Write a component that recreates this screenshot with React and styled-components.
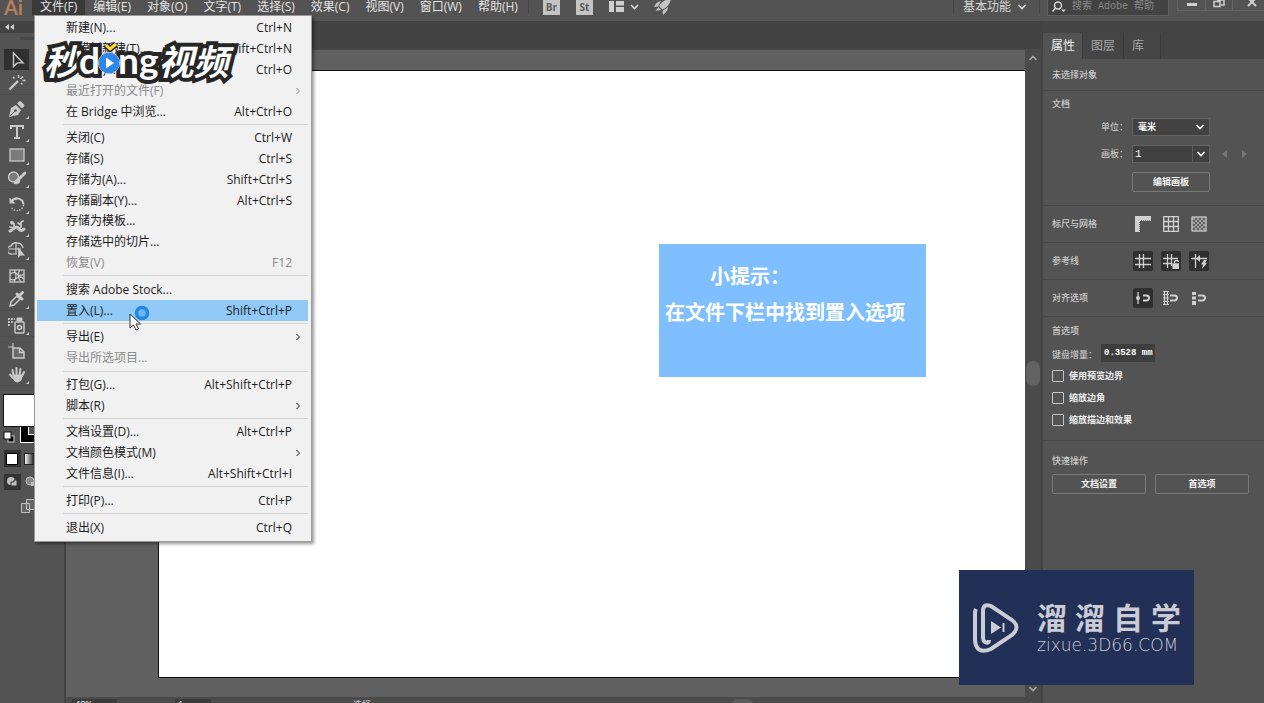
import React, { useState } from "react"
import styled, { createGlobalStyle } from "styled-components"

const GlobalStyle = createGlobalStyle`
  * {
    box-sizing: border-box;
  }
  body {
    margin: 0;
    background: #535353;
    color: #d8d8d8;
    font-family: "Open Sans", "Noto Sans CJK SC", sans-serif;
    font-size: 12px;
    line-height: 16px;
  }
  button,
  input,
  select {
    font: inherit;
    color: inherit;
    margin: 0;
    padding: 0;
    border: 0;
    background: none;
    border-radius: 0;
  }
  svg {
    display: block;
    flex: none;
  }
`

const Window = styled.div`
  position: relative;
  display: flex;
  flex-direction: column;
  height: 100vh;
  overflow: hidden;
`

const MenuBar = styled.header`
  display: flex;
  align-items: center;
  flex: none;
  height: 21px;
  padding-bottom: 7px;
  background: #535353;
`

const AppMark = styled.span`
  width: 32px;
  padding-left: 4px;
  color: #b57f5b;
  font-family: Lato, sans-serif;
  font-size: 20px;
  font-weight: bold;
`

const MenuTitle = styled.button`
  padding: 0 8px;
  color: #e4e4e4;
  white-space: nowrap;
  background: ${props => (props.$open ? "#3a3a3a" : "none")};
`

const BarRule = styled.span`
  width: 1px;
  height: 14px;
  margin: 0 ${props => props.$after || 0}px 0 ${props => props.$before || 0}px;
  background: #464646;
`

const AppBadge = styled.button`
  width: 17px;
  height: 16px;
  margin-right: 16px;
  background: #c4c4c4;
  color: #5a5a5a;
  font-size: 10px;
  font-weight: bold;
`

const IconButton = styled.button`
  display: flex;
  align-items: center;
  justify-content: center;
  margin-right: ${props => props.$gap || 0}px;
`

const Spacer = styled.div`
  flex: ${props => props.$grow || 1};
`

const Workspace = styled.button`
  display: flex;
  align-items: center;
  gap: 6px;
  padding: 0 12px 0 9px;
  white-space: nowrap;
`

const SearchBox = styled.label`
  display: flex;
  align-items: center;
  gap: 6px;
  width: 122px;
  height: 18px;
  padding-left: 4px;
  border: 1px solid #606060;
  background: #424242;
  input {
    width: 92px;
    font-family: "Liberation Mono", "Noto Sans CJK SC", monospace;
    font-size: 10px;
  }
  input::placeholder {
    color: #8a8a8a;
    opacity: 1;
  }
`

const WindowButtons = styled.div`
  display: flex;
  align-self: flex-start;
  margin-left: 8px;
  border: 1px solid #636363;
  border-width: 0 0 1px 1px;
  button {
    display: flex;
    justify-content: center;
    width: 27px;
    height: 10px;
  }
  button + button {
    border-left: 1px solid #636363;
  }
  button:last-child {
    width: 32px;
    padding-left: 6px;
  }
`

const Body = styled.div`
  display: flex;
  flex: 1;
  min-height: 0;
`

const ToolColumn = styled.aside`
  flex: none;
  width: 66px;
  border-right: 2px solid #434343;
  background: #535353;
`

const ToolHeader = styled.div`
  height: 12px;
  padding: 3px 5px;
  background: #434343;
`

const Grip = styled.div`
  height: 3px;
  margin: 4px 20px 8px;
  background: #474747;
`

const ToolGroup = styled.div`
  display: flex;
  flex-direction: column;
  padding-left: 3px;
  margin-bottom: 2px;
  border-bottom: 1px solid #4c4c4c;
`

const Tool = styled.button`
  position: relative;
  display: flex;
  align-items: center;
  justify-content: center;
  width: 27px;
  height: 23px;
  border: 1px solid #535353;
  background: ${props => (props.$active ? "#303030" : "none")};
  color: #c9c9c9;
  &::after {
    content: "";
    position: absolute;
    right: 0;
    bottom: 0;
    border-left: 3px solid transparent;
    border-bottom: 3px solid ${props => (props.$more ? "#c9c9c9" : "transparent")};
  }
`

const Swatches = styled.div`
  padding: 6px 0 0 3px;
`

const Document = styled.main`
  display: flex;
  flex-direction: column;
  flex: 1;
  min-width: 0;
`

const DocTabs = styled.div`
  flex: none;
  height: 28px;
  background: #424242;
`

const View = styled.div`
  display: flex;
  flex: 1;
  min-height: 0;
  background: #606060;
  border-top: 1px solid #4c4c4c;
`

const Pasteboard = styled.div`
  display: flex;
  flex: 1;
  padding: 20px 0 19px 92px;
`

const Artboard = styled.div`
  position: relative;
  flex: 1;
  border: 1px solid #101010;
  border-right: 0;
  background: #ffffff;
`

const Hint = styled.div`
  position: absolute;
  left: 500px;
  top: 173px;
  width: 267px;
  height: 133px;
  padding: 14px 6px;
  background: #7fbfff;
  color: #ffffff;
  font-family: "Noto Sans CJK SC", sans-serif;
  font-size: 20px;
  font-weight: bold;
  line-height: 36px;
  white-space: nowrap;
  p {
    margin: 0;
  }
  p:first-child {
    padding-left: 45px;
  }
`

const ScrollTrack = styled.div`
  display: flex;
  flex-direction: column;
  align-items: center;
  justify-content: space-between;
  width: 16px;
  padding: 5px 0;
  background: #4a4a4a;
  color: #a8a8a8;
`

const ScrollThumb = styled.div`
  width: 14px;
  height: 25px;
  border-radius: 7px;
  background: #626262;
`

const StatusBar = styled.footer`
  display: flex;
  align-items: flex-start;
  flex: none;
  height: 6px;
  overflow: hidden;
  padding: 2px 0 0 6px;
  background: #4b4b4b;
  font-size: 9px;
  line-height: 12px;
  input {
    flex: none;
    width: 45px;
    height: 12px;
    margin-right: 58px;
    padding-left: 3px;
    background: #3c3c3c;
    color: #ffffff;
  }
  input + input {
    width: 36px;
    margin-right: 142px;
  }
`

const BottomThumb = styled.div`
  width: 22px;
  height: 12px;
  border-radius: 6px;
  background: #5c5c5c;
`

const Panel = styled.aside`
  flex: none;
  width: 223px;
  border-left: 2px solid #434343;
  background: #535353;
  font-size: 9px;
`

const PanelTabs = styled.div`
  display: flex;
  height: 38px;
  padding-top: 12px;
  background: #444444;
`

const PanelTab = styled.button`
  padding: 0 8px;
  border-right: 1px solid #3a3a3a;
  background: ${props => (props.$active ? "#535353" : "#454545")};
  color: ${props => (props.$active ? "#f0f0f0" : "#a8a8a8")};
  font-size: 12px;
  &:first-child {
    padding-right: 7px;
  }
  &:last-child {
    padding-right: 16px;
  }
`

const Section = styled.section`
  padding: ${props => props.$pad || "8px"} 0;
  padding-left: 9px;
  border-bottom: 1px solid #474747;
  &:last-child {
    border-bottom: 0;
  }
`

const Heading = styled.h2`
  margin: 0;
  color: #cccccc;
  font-size: 9px;
  font-weight: 500;
  line-height: 16px;
`

const FieldRow = styled.div`
  display: flex;
  align-items: center;
  margin-top: ${props => props.$top || 9}px;
  label {
    width: 76px;
    margin-right: 4px;
    text-align: right;
  }
`

const SelectBox = styled.div`
  display: flex;
  align-items: center;
  width: 78px;
  height: 18px;
  border: 1px solid #636363;
  background: #424242;
  color: #ffffff;
  font-weight: bold;
  select {
    appearance: none;
    width: 100%;
    height: 16px;
    padding-left: 5px;
    line-height: 16px;
  }
  svg {
    margin-left: -14px;
    margin-right: 4px;
    pointer-events: none;
  }
`

const ComboBox = styled.div`
  display: flex;
  width: 78px;
  height: 18px;
  border: 1px solid #636363;
  background: #404040;
  color: #ffffff;
  input {
    flex: 1;
    min-width: 0;
    padding-left: 2px;
    font-family: "Liberation Mono", monospace;
    font-size: 11px;
  }
  button {
    display: flex;
    align-items: center;
    width: 17px;
    padding-left: 3px;
    border-left: 1px solid #5c5c5c;
  }
`

const Pager = styled.div`
  display: flex;
  gap: 13px;
  margin-left: 12px;
`

const BoardAction = styled.div`
  display: flex;
  margin-top: 9px;
  padding-left: 80px;
`

const OutlineButton = styled.button`
  width: ${props => props.$width}px;
  height: 20px;
  border: 1px solid #7a7a7a;
  border-radius: 2px;
  color: #f4f4f4;
  font-weight: bold;
`

const ToggleRow = styled.div`
  display: flex;
  align-items: center;
  gap: 8px;
  h2 {
    width: 73px;
  }
`

const Toggle = styled.button`
  display: flex;
  align-items: center;
  justify-content: center;
  width: 20px;
  height: 20px;
  border-radius: 2px;
  background: ${props => (props.$on ? "#2f2f2f" : "none")};
  color: #d0d0d0;
`

const Increment = styled.div`
  display: flex;
  align-items: flex-end;
  gap: 4px;
  margin-top: 5px;
  label {
    line-height: 14px;
  }
  input {
    width: 54px;
    height: 18px;
    padding-left: 3px;
    background: #3d3d3d;
    color: #ffffff;
    font-family: "Liberation Mono", monospace;
    font-size: 9px;
    font-weight: bold;
  }
`

const Check = styled.label`
  display: flex;
  align-items: center;
  gap: 5px;
  margin-top: 6px;
  color: #eeeeee;
  font-weight: bold;
  input {
    appearance: none;
    width: 12px;
    height: 12px;
    border: 1px solid #c4c4c4;
    border-radius: 1px;
  }
  input:checked {
    background: #c4c4c4;
  }
`

const ButtonPair = styled.div`
  display: flex;
  gap: 9px;
  margin-top: 5px;
`

const Dropdown = styled.ul`
  position: absolute;
  left: 34px;
  top: 15px;
  display: flex;
  flex-direction: column;
  width: 278px;
  min-height: 527px;
  margin: 0;
  padding: 2px 3px 3px 2px;
  border: 1px solid #9a9a9a;
  background: #f1f1f1;
  box-shadow: 2px 2px 3px rgba(0, 0, 0, 0.4);
  color: #1c1c1c;
  list-style: none;
`

const Item = styled.li`
  display: flex;
  flex: 1;
  background: ${props => (props.$active ? "#90c8f6" : "none")};
  button {
    display: flex;
    align-items: center;
    justify-content: space-between;
    width: 100%;
    padding: 0 16px 0 29px;
    line-height: 16px;
    white-space: nowrap;
  }
  button:disabled {
    color: #8a8a8a;
  }
  svg {
    margin-right: -9px;
  }
`

const Divider = styled.li`
  height: 6px;
  margin-left: 26px;
  border-bottom: 3px solid #f1f1f1;
  box-shadow: inset 0 -1px #d4d4d4;
`

const Cursor = styled.svg`
  position: absolute;
  left: 128px;
  top: 304px;
`

const VideoMark = styled.div`
  position: absolute;
  left: 44px;
  top: 39px;
  display: flex;
  align-items: center;
  color: #ffffff;
  font-family: Lato, sans-serif;
  font-size: 37px;
  font-weight: bold;
  line-height: 42px;
  -webkit-text-stroke: 8px #262626;
  stroke-linejoin: round;
  paint-order: stroke fill;
  em {
    font-family: "Noto Sans CJK SC", sans-serif;
    font-size: 35px;
    font-weight: bold;
  }
  svg {
    z-index: 1;
    margin: 0 -2px;
  }
`

const SiteMark = styled.div`
  position: absolute;
  right: 70px;
  bottom: 18px;
  display: flex;
  align-items: center;
  gap: 17px;
  width: 235px;
  height: 115px;
  padding-left: 13px;
  background: #222f56;
  color: #c9ccd4;
  strong {
    display: flex;
    gap: 8px;
    font-family: "Noto Sans CJK SC", sans-serif;
    font-size: 30px;
    font-weight: bold;
    line-height: 34px;
  }
  small {
    display: block;
    font-family: "DejaVu Sans", sans-serif;
    font-size: 17px;
    font-weight: 200;
    line-height: 24px;
  }
`

const menuTitles = [
  "文件(F)",
  "编辑(E)",
  "对象(O)",
  "文字(T)",
  "选择(S)",
  "效果(C)",
  "视图(V)",
  "窗口(W)",
  "帮助(H)",
]

const fileMenu = [
  { label: "新建(N)...", keys: "Ctrl+N" },
  { label: "从模板新建(T)...", keys: "Shift+Ctrl+N" },
  { label: "打开(O)...", keys: "Ctrl+O" },
  { label: "最近打开的文件(F)", sub: true, disabled: true },
  { label: "在 Bridge 中浏览...", keys: "Alt+Ctrl+O" },
  null,
  { label: "关闭(C)", keys: "Ctrl+W" },
  { label: "存储(S)", keys: "Ctrl+S" },
  { label: "存储为(A)...", keys: "Shift+Ctrl+S" },
  { label: "存储副本(Y)...", keys: "Alt+Ctrl+S" },
  { label: "存储为模板..." },
  { label: "存储选中的切片..." },
  { label: "恢复(V)", keys: "F12", disabled: true },
  null,
  { label: "搜索 Adobe Stock..." },
  { label: "置入(L)...", keys: "Shift+Ctrl+P", active: true },
  null,
  { label: "导出(E)", sub: true },
  { label: "导出所选项目...", disabled: true },
  null,
  { label: "打包(G)...", keys: "Alt+Shift+Ctrl+P" },
  { label: "脚本(R)", sub: true },
  null,
  { label: "文档设置(D)...", keys: "Alt+Ctrl+P" },
  { label: "文档颜色模式(M)", sub: true },
  { label: "文件信息(I)...", keys: "Alt+Shift+Ctrl+I" },
  null,
  { label: "打印(P)...", keys: "Ctrl+P" },
  null,
  { label: "退出(X)", keys: "Ctrl+Q" },
]

const toolGroups = [
  [
    {
      name: "选择工具",
      active: true,
      art: <path d="M5.500 2v13.500l3.800-3.600h5.700z" fill="none" stroke="currentColor" strokeWidth="1.400" />,
    },
    {
      name: "魔棒工具",
      art: (
        <g stroke="currentColor" fill="none">
          <path d="M1.500 15.500L10 7" strokeWidth="2.400" />
          <path d="M10.500 1v3M14.500 6.500h3M12.500 5l2.500-2.500M5 3l1.500 1.500M13 9l1.500 1.500" strokeWidth="1.600" />
        </g>
      ),
    },
  ],
  [
    {
      name: "钢笔工具",
      more: true,
      art: (
        <g>
          <path d="M1 17l2-9 5-3 5 5-3 5z" fill="currentColor" />
          <path d="M9 3.500l2-2q1-1 2 0l3 3q1 1 0 2l-2 2z" fill="currentColor" />
          <path d="M2 16l5-5" stroke="#535353" />
          <circle cx="7.500" cy="10.500" r="1.300" fill="#535353" />
        </g>
      ),
    },
    {
      name: "文字工具",
      more: true,
      art: (
        <path
          d="M3 6V3h12v3M9 3v12M6 15h6"
          fill="none"
          stroke="currentColor"
          strokeWidth="2"
        />
      ),
    },
    {
      name: "矩形工具",
      more: true,
      art: <rect x="2" y="3" width="14" height="12" fill="#7a7a7a" stroke="currentColor" strokeWidth="1.300" />,
    },
    {
      name: "斑点画笔工具",
      more: true,
      art: (
        <g stroke="currentColor">
          <circle cx="5.500" cy="8" r="5" fill="#7a7a7a" strokeWidth="1.400" />
          <path d="M17 4l-7 7" strokeWidth="3" strokeLinecap="round" />
          <path d="M10 10q-3 0-4 4.500 5 1 6-2.500z" fill="currentColor" />
        </g>
      ),
    },
  ],
  [
    {
      name: "旋转工具",
      more: true,
      art: (
        <g fill="none" stroke="currentColor">
          <path d="M3.500 6.500A6.500 6.500 0 0 1 15.500 9.500" strokeWidth="2" />
          <path d="M15.500 10A6.500 6.500 0 0 1 3 11.500" strokeWidth="1.500" strokeDasharray="1.300 1.500" />
          <path d="M1.500 2.500v6h6z" fill="currentColor" stroke="none" />
        </g>
      ),
    },
    {
      name: "宽度工具",
      more: true,
      art: (
        <g fill="none" stroke="currentColor" strokeLinecap="round">
          <path d="M2 13q3-1 5-3t4 1 5 0" strokeWidth="3" />
          <path d="M3 4q4 0 3 6M2 9l4 1M15 3q-3 1-2 4t-4 4M10 5l3 2" strokeWidth="1.800" />
          <circle cx="4" cy="5" r="1.200" fill="currentColor" />
          <path d="M5 13l4-2" stroke="#535353" />
        </g>
      ),
    },
    {
      name: "形状生成器工具",
      more: true,
      art: (
        <g fill="none" stroke="currentColor">
          <path d="M4 13a4 4 0 0 1-1-8q2-4 6-3 5 0 6 5" strokeWidth="1.400" />
          <path d="M1 8h12M8 2v11M4 13h5" strokeWidth="1.200" />
          <path d="M10 6v11l2.500-2.500H17z" fill="currentColor" stroke="none" />
        </g>
      ),
    },
  ],
  [
    {
      name: "网格工具",
      art: (
        <g fill="none" stroke="currentColor" strokeWidth="1.300">
          <rect x="2" y="3" width="14" height="12" />
          <path d="M2 7q5-3 7 0t7 0M2 12q4 2 7-1t7 1M6 3q4 5 0 12M12 3q-4 5 1 12" />
        </g>
      ),
    },
    {
      name: "吸管工具",
      more: true,
      art: (
        <g>
          <path d="M2 16l1-4 6-6 3 3-6 6z" fill="none" stroke="currentColor" strokeWidth="1.500" />
          <path d="M9 4l5 5M10.500 6.500l4-4" stroke="currentColor" strokeWidth="3" strokeLinecap="round" />
        </g>
      ),
    },
  ],
  [
    {
      name: "符号喷枪工具",
      more: true,
      art: (
        <g fill="none" stroke="currentColor">
          <rect x="7" y="6" width="9" height="11" rx="1" strokeWidth="1.500" />
          <path d="M9 5V2h5v3z" fill="currentColor" />
          <circle cx="11.500" cy="11.500" r="2" strokeWidth="1.600" />
          <path d="M0 3h7M0 6h5M0 9h3" strokeWidth="1.800" strokeDasharray="1.800 1.200" />
        </g>
      ),
    },
  ],
  [
    {
      name: "画板工具",
      art: (
        <g fill="none" stroke="currentColor" strokeWidth="1.500">
          <path d="M5 1v5M0 5h5" strokeWidth="1.200" />
          <path d="M5 6h7l4 4v6H5z" fill="#6a6a6a" />
          <path d="M11.500 6v4.500H16" />
        </g>
      ),
    },
    {
      name: "抓手工具",
      more: true,
      art: (
        <g fill="none" stroke="currentColor" strokeWidth="2" strokeLinecap="round">
          <path d="M5.500 10L4.500 5M8.500 9V3M11.500 9.500l1-5.500M14 11l2-4M5 13L2 9.500" />
          <path d="M5.500 10l9 0-1.500 5q-1.500 2-4 2t-4-4z" fill="currentColor" strokeWidth="1" />
        </g>
      ),
    },
  ],
]

const Chevron = ({ up }) => (
  <svg width="10" height="6" viewBox="0 0 10 6">
    <path
      d={up ? "M1.500 5L5 1.500 8.500 5" : "M1.500 1L5 4.500 8.500 1"}
      fill="none"
      stroke="currentColor"
      strokeWidth="1.600"
    />
  </svg>
)

const SubArrow = () => (
  <svg width="6" height="8" viewBox="0 0 6 8">
    <path d="M1.500 1l3 3-3 3" fill="none" stroke="currentColor" />
  </svg>
)

const TopBar = ({ open, setOpen }) => (
  <MenuBar>
    <AppMark>Ai</AppMark>
    {menuTitles.map((title, i) => (
      <MenuTitle
        key={title}
        $open={open && i === 0}
        onClick={() => i === 0 && setOpen(!open)}
      >
        {title}
      </MenuTitle>
    ))}
    <BarRule $before={2} $after={14} />
    <AppBadge>Br</AppBadge>
    <AppBadge>St</AppBadge>
    <IconButton aria-label="排列文档" $gap={15}>
      <svg width="30" height="14" viewBox="4 0 30 14" fill="#cfcfcf">
        <path d="M2 1h7v11H2zM11 1h8v4.500h-8zM11 7h8v5h-8z" />
        <path d="M26 5l3.500 3.500L33 5" fill="none" stroke="#e0e0e0" strokeWidth="1.600" />
      </svg>
    </IconButton>
    <IconButton aria-label="GPU 性能">
      <svg width="18" height="16" viewBox="0 0 18 16" fill="#c4c4c4">
        <path d="M17 0Q9 0 5 7l3.500 3.500q7-3 8.500-10.500zM7 2Q2 3 0 8l4-.5zM14 8q0 4-5 8l-.5-4zM4.500 8L1.500 12 7 11z" />
      </svg>
    </IconButton>
    <Spacer />
    <BarRule />
    <Workspace>
      基本功能
      <Chevron />
    </Workspace>
    <BarRule $after={7} />
    <SearchBox>
      <svg width="14" height="12" viewBox="0 0 14 12" fill="none" stroke="#d8d8d8" strokeWidth="1.500">
        <circle cx="6" cy="4.500" r="3.500" />
        <path d="M3.500 7L.5 10.500" />
        <path d="M9 8.500h5L11.500 11z" fill="#d8d8d8" stroke="none" />
      </svg>
      <input placeholder="搜索 Adobe 帮助" aria-label="搜索 Adobe 帮助" />
    </SearchBox>
    <WindowButtons>
      <button aria-label="最小化">
        <svg width="12" height="8">
          <path d="M1 4.500h10" stroke="#d0d0d0" strokeWidth="3" />
        </svg>
      </button>
      <button aria-label="还原">
        <svg width="12" height="8" fill="none" stroke="#d0d0d0" strokeWidth="1.500">
          <path d="M1 1.500h6v5H1zM4 0h7v5H8" />
        </svg>
      </button>
      <button aria-label="关闭">
        <svg width="12" height="8" stroke="#d0d0d0" strokeWidth="2">
          <path d="M2-2l8 8M10-2L2 6" />
        </svg>
      </button>
    </WindowButtons>
  </MenuBar>
)

const Toolbar = () => (
  <ToolColumn>
    <ToolHeader>
      <svg width="9" height="6" viewBox="0 0 9 6" fill="#d0d0d0">
        <path d="M4 0v6L0 3zM9 0v6L5 3z" />
      </svg>
    </ToolHeader>
    <Grip />
    {toolGroups.map((group, i) => (
      <ToolGroup key={i}>
        {group.map(tool => (
          <Tool key={tool.name} aria-label={tool.name} $active={tool.active} $more={tool.more}>
            <svg width="18" height="18" viewBox="0 0 18 18">
              {tool.art}
            </svg>
          </Tool>
        ))}
      </ToolGroup>
    ))}
    <Swatches>
      <svg width="60" height="124" viewBox="0 0 60 124">
        <rect x="17.500" y="19.500" width="31" height="29" fill="#000000" stroke="#ffffff" />
        <rect x="25.500" y="27.500" width="14" height="13" fill="#535353" stroke="#ffffff" />
        <rect x="0.500" y="0.500" width="33" height="32" fill="#ffffff" stroke="#111111" />
        <rect x="5" y="42" width="6" height="6" fill="#000000" stroke="#d0d0d0" />
        <rect x="1" y="38" width="7" height="7" fill="#ffffff" stroke="#111111" />
        <rect x="1" y="56" width="17" height="17" fill="#333333" />
        <rect x="3.500" y="59.500" width="11" height="11" fill="#ffffff" stroke="#000000" />
        <linearGradient id="fade">
          <stop offset="0" stopColor="#ffffff" />
          <stop offset="1" stopColor="#000000" />
        </linearGradient>
        <rect x="21.500" y="59.500" width="11" height="11" fill="url(#fade)" stroke="#222222" />
        <rect x="1" y="80" width="17" height="16" fill="#333333" />
        <circle cx="8" cy="87" r="4" fill="#c0c0c0" />
        <path d="M8 88h3v-2h3v6H8z" fill="#c0c0c0" stroke="#333333" />
        <circle cx="27" cy="87" r="4" fill="#888888" stroke="#c0c0c0" />
        <path d="M28 88h5v4h-5z" fill="#c0c0c0" />
        <path d="M18.500 109.500h8v9h-8zM23.500 105.500h11v10h-11z" fill="#666666" stroke="#c0c0c0" />
      </svg>
    </Swatches>
  </ToolColumn>
)

const FileMenu = () => (
  <Dropdown>
    {fileMenu.map((item, i) =>
      item ? (
        <Item key={item.label} $active={item.active}>
          <button disabled={item.disabled}>
            <span>{item.label}</span>
            {item.keys && <span>{item.keys}</span>}
            {item.sub && <SubArrow />}
          </button>
        </Item>
      ) : (
        <Divider key={i} />
      )
    )}
  </Dropdown>
)

const Properties = () => (
  <Panel>
    <PanelTabs>
      <PanelTab $active>属性</PanelTab>
      <PanelTab>图层</PanelTab>
      <PanelTab>库</PanelTab>
    </PanelTabs>
    <Section $pad="8px 0 7px">
      <Heading>未选择对象</Heading>
    </Section>
    <Section $pad="5px 0 13px">
      <Heading>文档</Heading>
      <FieldRow $top={6}>
        <label htmlFor="units">单位：</label>
        <SelectBox>
          <select id="units" defaultValue="mm">
            <option value="mm">毫米</option>
          </select>
          <Chevron />
        </SelectBox>
      </FieldRow>
      <FieldRow>
        <label htmlFor="board">画板：</label>
        <ComboBox>
          <input id="board" defaultValue="1" />
          <button aria-label="选择画板">
            <Chevron />
          </button>
        </ComboBox>
        <Pager>
          <button aria-label="上一个">
            <svg width="6" height="8" fill="#777777">
              <path d="M5 0v8L0 4z" />
            </svg>
          </button>
          <button aria-label="下一个">
            <svg width="6" height="8" fill="#777777">
              <path d="M1 0v8l5-4z" />
            </svg>
          </button>
        </Pager>
      </FieldRow>
      <BoardAction>
        <OutlineButton $width={78}>编辑画板</OutlineButton>
      </BoardAction>
    </Section>
    <Section>
      <ToggleRow>
        <Heading>标尺与网格</Heading>
        <Toggle aria-label="标尺">
          <svg width="16" height="16" fill="currentColor">
            <path d="M0 0h16v5H5v11H0z" />
            <path d="M6 4.500h10M4.500 6v10" stroke="#777777" strokeDasharray="1 1" />
          </svg>
        </Toggle>
        <Toggle aria-label="网格">
          <svg width="16" height="16" fill="none" stroke="currentColor" strokeWidth="1.300">
            <path d="M.7.700h14.600v14.600H.7zM5.500 0v16M10.500 0v16M0 5.500h16M0 10.500h16" />
          </svg>
        </Toggle>
        <Toggle aria-label="透明度网格">
          <svg width="16" height="16">
            <rect x="1" y="1" width="14" height="14" fill="#606060" stroke="#cccccc" strokeWidth="1.300" />
            <path
              d="M2 3h12M2 7h12M2 11h12M4 5h10M4 9h10M4 13h10"
              stroke="#a4a4a4"
              strokeWidth="2"
              strokeDasharray="2 2"
            />
          </svg>
        </Toggle>
      </ToggleRow>
    </Section>
    <Section>
      <ToggleRow>
        <Heading>参考线</Heading>
        <Toggle $on aria-label="显示参考线">
          <svg width="16" height="16" stroke="currentColor" strokeWidth="1.300">
            <path d="M0 5.500h16M0 11.500h16M4.500 1v14M8.500 1v14" />
          </svg>
        </Toggle>
        <Toggle $on aria-label="锁定参考线">
          <svg width="16" height="16" fill="none" stroke="currentColor" strokeWidth="1.300">
            <path d="M0 5.500h15M0 10.500h8M4.500 1v14M8.500 1v12" />
            <path d="M10 11h6v4.500h-6z" fill="currentColor" />
            <path d="M11.500 10.500V9q0-1.500 2-1.500t2 1.500" />
          </svg>
        </Toggle>
        <Toggle $on aria-label="智能参考线">
          <svg width="16" height="16" fill="none" stroke="currentColor" strokeWidth="1.300">
            <path d="M0 5.500h16M4.500 1v14" />
            <path d="M5 5.500L9 2v7z" fill="currentColor" stroke="none" />
            <path d="M13 7l-3 4.500h2l-1 4.500 5-6h-2l2-3z" fill="currentColor" stroke="none" />
          </svg>
        </Toggle>
      </ToggleRow>
    </Section>
    <Section>
      <ToggleRow>
        <Heading>对齐选项</Heading>
        <Toggle $on aria-label="对齐点">
          <svg width="16" height="16" fill="none" stroke="currentColor" strokeWidth="1.300">
            <path d="M3 2v12" />
            <circle cx="3" cy="8" r="2" fill="currentColor" stroke="none" />
            <path d="M8 5.500h3.500a2.500 2.500 0 0 1 0 5H8" strokeWidth="2" />
          </svg>
        </Toggle>
        <Toggle aria-label="对齐网格">
          <svg width="16" height="16" fill="none" stroke="currentColor" strokeWidth="1.200">
            <path d="M1.500 1v14M4.500 1v14M0 1.500h6M0 4.500h6M0 8h6M0 11.500h6M0 14.500h6" />
            <path d="M7 5.500h4.500a2.500 2.500 0 0 1 0 5H7" strokeWidth="2" />
          </svg>
        </Toggle>
        <Toggle aria-label="对齐像素">
          <svg width="16" height="16" fill="none" stroke="currentColor" strokeWidth="2">
            <path d="M1 2h4v3H1zM1 6.500h4v3H1zM1 11h4v4H1z" fill="currentColor" stroke="none" />
            <path d="M7 5.500h4.500a2.500 2.500 0 0 1 0 5H7" />
          </svg>
        </Toggle>
      </ToggleRow>
    </Section>
    <Section $pad="6px 0 12px">
      <Heading>首选项</Heading>
      <Increment>
        <label htmlFor="step">键盘增量：</label>
        <input id="step" defaultValue="0.3528 mm" />
      </Increment>
      {["使用预览边界", "缩放边角", "缩放描边和效果"].map(name => (
        <Check key={name}>
          <input type="checkbox" />
          {name}
        </Check>
      ))}
    </Section>
    <Section $pad="12px 0 0">
      <Heading>快速操作</Heading>
      <ButtonPair>
        <OutlineButton $width={94}>文档设置</OutlineButton>
        <OutlineButton $width={94}>首选项</OutlineButton>
      </ButtonPair>
    </Section>
  </Panel>
)

const App = () => {
  const [open, setOpen] = useState(true)
  return (
    <Window>
      <GlobalStyle />
      <TopBar open={open} setOpen={setOpen} />
      <Body>
        <Toolbar />
        <Document>
          <DocTabs />
          <View>
            <Pasteboard>
              <Artboard>
                <Hint>
                  <p>小提示：</p>
                  <p>在文件下栏中找到置入选项</p>
                </Hint>
              </Artboard>
            </Pasteboard>
            <ScrollTrack>
              <Chevron up />
              <ScrollThumb />
              <Chevron />
            </ScrollTrack>
          </View>
          <StatusBar>
            <input aria-label="缩放" defaultValue="48%" />
            <input aria-label="画板导航" defaultValue="1" />
            <span>选择</span>
            <Spacer $grow={5} />
            <BottomThumb />
            <Spacer $grow={4} />
          </StatusBar>
        </Document>
        <Properties />
      </Body>
      {open && <FileMenu />}
      <Cursor width="24" height="28" viewBox="0 0 24 28">
        <circle cx="14" cy="9" r="5.500" fill="#6fb6f2" stroke="#2189e4" strokeWidth="3.500" />
        <path d="M2 10v14l3.500-3 2.500 5 2.500-1-2.500-5h4.500z" fill="#ffffff" stroke="#333333" />
      </Cursor>
      <VideoMark>
        <em>秒</em>
        <span>d</span>
        <svg width="22" height="36" viewBox="0 0 22 36">
          <circle cx="11" cy="21" r="10.500" fill="#2f86ee" stroke="#ffffff" />
          <path d="M8 15.500v11l8-5.500z" fill="#ffffff" />
          <path d="M8 3l4 4 6-5" fill="none" stroke="#262626" strokeWidth="6" />
          <path d="M8 3l4 4 6-5" fill="none" stroke="#ffd92e" strokeWidth="3" />
        </svg>
        <span>ng</span>
        <em>视频</em>
      </VideoMark>
      <SiteMark>
        <svg width="48" height="52" viewBox="0 0 48 52" fill="none" stroke="#c9ccd4" strokeWidth="4">
          <path d="M17 38q0 4-4 2-2-1-2-5V9q0-8 8-5l21 14q9 7 0 15L19 47Q4 53 3 38V12q0-3 1-5" />
          <path d="M19 19v13l10-6.500z" fill="#c9ccd4" stroke="none" />
          <path d="M31.500 21v9" strokeWidth="2" />
        </svg>
        <div>
          <strong>
            {[..."溜溜自学"].map((glyph, i) => (
              <span key={i}>{glyph}</span>
            ))}
          </strong>
          <small>zixue.3D66.COM</small>
        </div>
      </SiteMark>
    </Window>
  )
}

export default App
